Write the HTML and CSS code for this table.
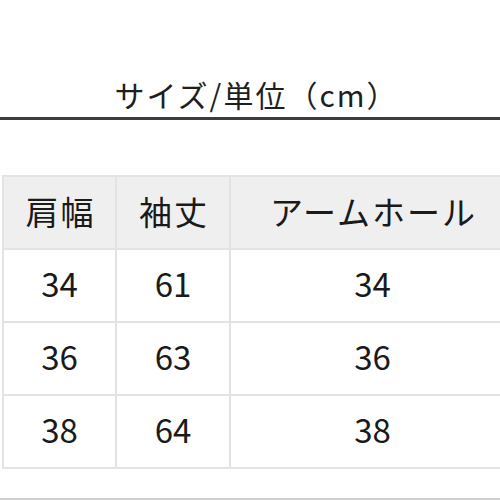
FILE: index.html
```html
<!DOCTYPE html>
<html lang="ja">
<head>
<meta charset="utf-8">
<link rel="stylesheet" href="styles.css">
</head>
<body>
<div class="page">
  <h1 class="title">サイズ/単位（cm）</h1>
  <div class="rule"></div>
  <table class="size-table">
    <colgroup>
      <col class="c1"><col class="c2"><col class="c3">
    </colgroup>
    <thead>
      <tr><th>肩幅</th><th>袖丈</th><th>アームホール</th></tr>
    </thead>
    <tbody>
      <tr><td>34</td><td>61</td><td>34</td></tr>
      <tr><td>36</td><td>63</td><td>36</td></tr>
      <tr><td>38</td><td>64</td><td>38</td></tr>
    </tbody>
  </table>
  <div class="bottom-rule"></div>
</div>
</body>
</html>
```
FILE: styles.css
```css
html, body {
  margin: 0;
  padding: 0;
  background: #ffffff;
  overflow: hidden;
}
.page {
  width: 500px;
  height: 500px;
  overflow: hidden;
  font-family: "Noto Sans CJK JP", "Noto Sans", sans-serif;
  color: #1a1a1a;
  display: flex;
  flex-direction: column;
}
.title {
  margin: 0 0 7px;
  padding-top: 79px;
  padding-left: 13px;
  font-size: 30px;
  font-weight: 400;
  line-height: 31px;
  letter-spacing: 2px;
  text-align: center;
  color: #1e1e1e;
  flex: none;
}
.rule {
  height: 3px;
  background: #3c3c3c;
  flex: none;
}
.size-table {
  margin-top: 55px;
  margin-left: 2px;
  border-collapse: collapse;
  table-layout: fixed;
  width: 512px;
  flex: none;
}
.c1 { width: 113px; }
.c2 { width: 114px; }
.c3 { width: 285px; }
.size-table th,
.size-table td {
  border: 2px solid #e3e3e3;
  box-sizing: border-box;
  height: 73px;
  padding: 0 0 4px;
  text-align: center;
  vertical-align: middle;
  font-size: 33px;
  font-weight: 400;
  line-height: 1;
  color: #1a1a1a;
}
.size-table th {
  background: #efefef;
  letter-spacing: 2px;
  padding-left: 2px;
  padding-bottom: 2px;
}
.bottom-rule {
  margin-top: 29px;
  height: 2px;
  background: #cfcfcf;
  flex: none;
}
```
